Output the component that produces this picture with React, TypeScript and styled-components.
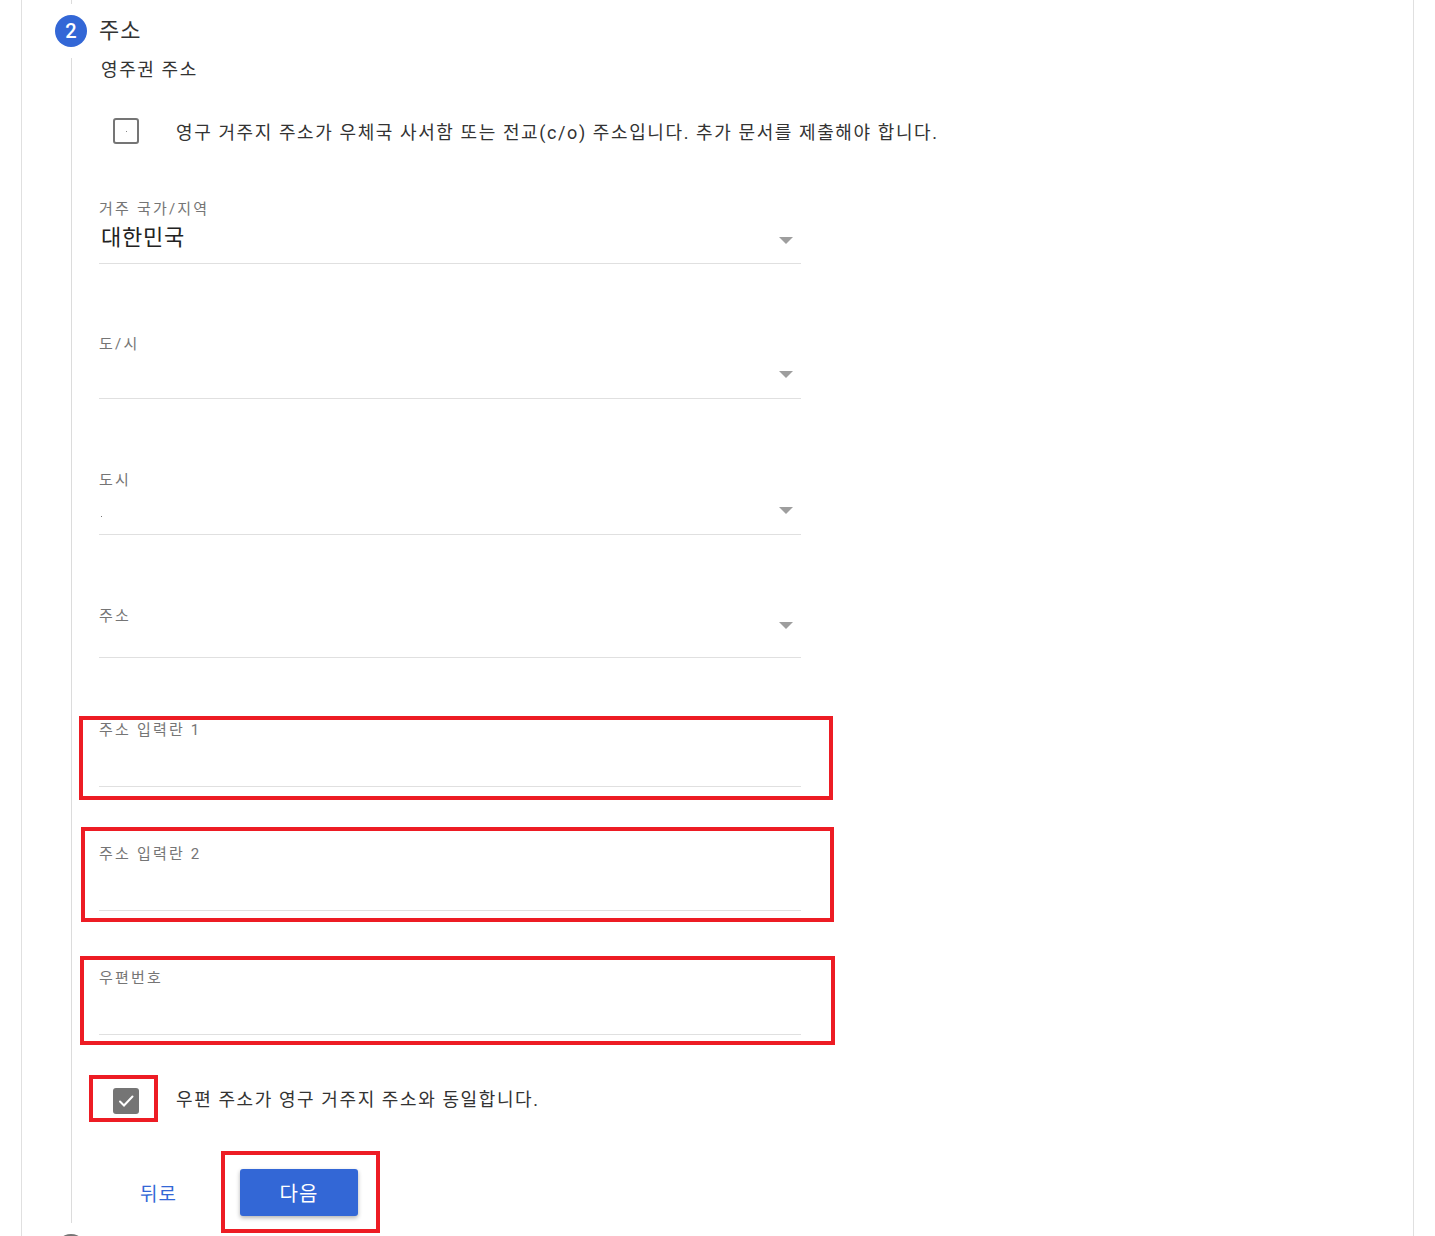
import React from 'react';
import styled, { createGlobalStyle } from 'styled-components';

const GlobalStyle = createGlobalStyle`
  html, body {
    margin: 0;
    padding: 0;
    background: #fff;
    overflow: hidden;
  }
  body {
    font-family: Roboto, 'Noto Sans CJK KR', 'Noto Sans', sans-serif;
    color: #333;
  }
`;

const Card = styled.div`
  margin-left: 21px;
  width: 1393px;
  box-sizing: border-box;
  border-left: 1px solid #e0e0e0;
  border-right: 1px solid #e0e0e0;
  min-height: 1300px;
`;

const Connector = styled.div<{ $h: number }>`
  margin-left: 49px;
  height: ${(p) => p.$h}px;
  border-left: 1px solid #dcdcdc;
`;

const StepHeader = styled.div<{ $mt: number }>`
  display: flex;
  align-items: center;
  gap: 12px;
  padding-left: 33px;
  margin-top: ${(p) => p.$mt}px;
`;

const StepCircle = styled.div<{ $active?: boolean }>`
  width: 32px;
  height: 32px;
  border-radius: 50%;
  background: ${(p) => (p.$active ? '#3367d6' : '#757575')};
  color: #fff;
  font-size: 20px;
  font-weight: 500;
  display: flex;
  align-items: center;
  justify-content: center;
  flex-shrink: 0;
`;

const StepTitle = styled.div`
  font-size: 22px;
  line-height: 32px;
  letter-spacing: 1px;
  color: #333;
`;

const StepBody = styled.div`
  margin-left: 49px;
  margin-top: 11px;
  border-left: 1px solid #dcdcdc;
  padding-left: 27px;
  display: flex;
  flex-direction: column;
  align-items: flex-start;
`;

const SubTitle = styled.div`
  font-size: 18px;
  line-height: 24px;
  letter-spacing: 1.6px;
  color: #333;
  padding-left: 2px;
`;

const CheckRow = styled.div<{ $mt: number }>`
  display: flex;
  align-items: center;
  min-height: 48px;
  margin-top: ${(p) => p.$mt}px;
`;

const EmptyBox = styled.div`
  width: 26px;
  height: 26px;
  box-sizing: border-box;
  margin-left: 14px;
  border: 2px solid #757575;
  border-radius: 3px;
  display: flex;
  align-items: center;
  justify-content: center;
  &::after {
    content: '';
    width: 1px;
    height: 1px;
    background: #888;
  }
`;

const CheckedBox = styled.div`
  width: 26px;
  height: 26px;
  border-radius: 3px;
  background: #757575;
  display: flex;
  align-items: center;
  justify-content: center;
`;

const CheckText = styled.div<{ $ml: number }>`
  margin-left: ${(p) => p.$ml}px;
  font-size: 18px;
  letter-spacing: 1.6px;
  color: #333;
  white-space: nowrap;
`;

const FieldWrap = styled.div<{ $mt: number }>`
  position: relative;
  width: 702px;
  margin-top: ${(p) => p.$mt}px;
  padding-bottom: 9px;
  border-bottom: 1px solid #e0e0e0;
`;

const FieldLabel = styled.div`
  font-size: 15px;
  line-height: 18px;
  letter-spacing: 2.2px;
  color: #757575;
  padding-top: 1px;
  margin-bottom: -1px;
`;

const FieldValue = styled.div<{ $h: number }>`
  margin-top: 5px;
  height: ${(p) => p.$h}px;
  font-size: 22px;
  line-height: 32px;
  letter-spacing: 0.8px;
  color: #222;
  padding-left: 2px;
  display: flex;
  align-items: flex-end;
`;

const Dot = styled.span`
  width: 1px;
  height: 1px;
  background: #777;
  margin-bottom: 8px;
`;

const Arrow = styled.div<{ $top: number }>`
  position: absolute;
  right: 8px;
  top: ${(p) => p.$top}px;
  width: 0;
  height: 0;
  border-left: 7.5px solid transparent;
  border-right: 7.5px solid transparent;
  border-top: 7px solid #9e9e9e;
`;

const Highlight = styled.div<{ $mt: number; $ml: number; $pad: string; $w?: number }>`
  box-sizing: border-box;
  border: 4px solid #ed1c24;
  margin-top: ${(p) => p.$mt}px;
  margin-left: ${(p) => p.$ml}px;
  padding: ${(p) => p.$pad};
  width: ${(p) => (p.$w ? `${p.$w}px` : 'auto')};
  flex-shrink: 0;
  & > ${FieldWrap} {
    margin-top: 0;
  }
`;

const ActionRow = styled.div`
  display: flex;
  align-items: center;
  margin-top: 29px;
  margin-bottom: -10px;
`;

const BackButton = styled.button`
  width: 81px;
  margin-left: 41px;
  padding: 0;
  border: none;
  background: none;
  text-align: left;
  font-family: inherit;
  font-size: 19px;
  letter-spacing: 1px;
  color: #3367d6;
  cursor: pointer;
`;

const NextButton = styled.button`
  width: 118px;
  height: 47px;
  border: none;
  border-radius: 3px;
  background: #3367d6;
  color: #fff;
  font-family: inherit;
  font-size: 20px;
  letter-spacing: 1px;
  box-shadow: 0 2px 4px rgba(0, 0, 0, 0.3);
  cursor: pointer;
`;

type FieldProps = {
  label: string;
  value?: React.ReactNode;
  mt?: number;
  valueHeight?: number;
  arrowTop?: number;
};

function Field({ label, value, mt = 0, valueHeight = 32, arrowTop }: FieldProps) {
  return (
    <FieldWrap $mt={mt}>
      <FieldLabel>{label}</FieldLabel>
      <FieldValue $h={valueHeight}>{value}</FieldValue>
      {arrowTop !== undefined && <Arrow $top={arrowTop} />}
    </FieldWrap>
  );
}

function CheckIcon() {
  return (
    <svg width="18" height="18" viewBox="0 0 18 18">
      <path d="M3 9.5 L7 13.5 L15.5 4.5" fill="none" stroke="#fff" strokeWidth="2" strokeLinecap="round" />
    </svg>
  );
}

export default function App() {
  return (
    <>
      <GlobalStyle />
      <Card>
        <Connector $h={4} />
        <StepHeader $mt={11}>
          <StepCircle $active>2</StepCircle>
          <StepTitle>주소</StepTitle>
        </StepHeader>
        <StepBody>
          <SubTitle>영주권 주소</SubTitle>
          <CheckRow $mt={25}>
            <EmptyBox />
            <CheckText $ml={37}>
              영구 거주지 주소가 우체국 사서함 또는 전교(c/o) 주소입니다. 추가 문서를 제출해야 합니다.
            </CheckText>
          </CheckRow>

          <Field label="거주 국가/지역" value="대한민국" mt={44} arrowTop={38} />
          <Field label="도/시" mt={70} arrowTop={37} />
          <Field label="도시" value={<Dot />} mt={71} arrowTop={37} />
          <Field label="주소" mt={71} valueHeight={19} arrowTop={16} />

          <Highlight $mt={58} $ml={-20} $w={754} $pad="0 28px 9px 16px">
            <Field label="주소 입력란 1" valueHeight={34} />
          </Highlight>
          <Highlight $mt={27} $ml={-18} $w={753} $pad="13px 29px 7px 14px">
            <Field label="주소 입력란 2" valueHeight={34} />
          </Highlight>
          <Highlight $mt={34} $ml={-19} $w={755} $pad="8px 30px 6px 15px">
            <Field label="우편번호" valueHeight={34} />
          </Highlight>

          <CheckRow $mt={29}>
            <Highlight $mt={0} $ml={-10} $pad="9px 15px 4px 20px">
              <CheckedBox>
                <CheckIcon />
              </CheckedBox>
            </Highlight>
            <CheckText $ml={18}>우편 주소가 영구 거주지 주소와 동일합니다.</CheckText>
          </CheckRow>

          <ActionRow>
            <BackButton>뒤로</BackButton>
            <Highlight $mt={0} $ml={0} $pad="14px 18px 13px 15px">
              <NextButton>다음</NextButton>
            </Highlight>
          </ActionRow>
        </StepBody>
        <StepHeader $mt={11}>
          <StepCircle />
        </StepHeader>
      </Card>
    </>
  );
}
